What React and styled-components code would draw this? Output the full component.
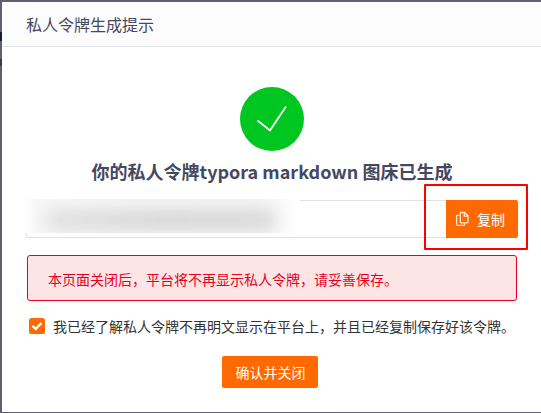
import React from "react";
import styled, { createGlobalStyle } from "styled-components";

const GlobalStyle = createGlobalStyle`
  * { box-sizing: border-box; }
  body { margin: 0; overflow: hidden; }
`;

const Backdrop = styled.div`
  position: relative;
  width: 541px;
  height: 413px;
  padding: 2px 0 1px 2px;
  background: linear-gradient(90deg, #625e6d, #65616f);
  font-family: "Noto Sans CJK SC", "Noto Sans", sans-serif;
  font-size: 14px;
  overflow: hidden;
`;

const PageTrace = styled.span`
  position: absolute;
  left: 0;
  top: ${(p) => p.$top}px;
  width: 2px;
  height: ${(p) => p.$height}px;
  background: ${(p) => p.$color};
`;

const Dialog = styled.section`
  display: flex;
  flex-direction: column;
  height: 410px;
  background: #fff;
`;

const Header = styled.header`
  height: 45px;
  padding-left: 24px;
  border-bottom: 1px solid #e3e9ed;
  background: #fcfcfc;
  color: #45485f;
  font-size: 16px;
  line-height: 44px;
`;

const Body = styled.main`
  display: flex;
  flex-direction: column;
  align-items: center;
  padding: 40px 25px 0 24px;
`;

const SuccessMark = styled.svg`
  display: block;
  width: 64px;
  height: 64px;
  margin-left: 1px;
`;

const Title = styled.h1`
  margin: 8px 0 1px 2px;
  height: 24px;
  line-height: 24px;
  color: #45485f;
  font-size: 18px;
  font-weight: 700;
  white-space: nowrap;
`;

const TokenRow = styled.div`
  position: relative;
  display: flex;
  align-self: stretch;
  width: 492px;
  height: 38px;
  margin-top: 16px;
`;

const TokenField = styled.div`
  flex: 1;
  border: 1px solid #dfdfe8;
  border-right: 0;
  border-radius: 3px 0 0 3px;
  background: #fff;
`;

const TokenMask = styled.div`
  position: absolute;
  left: -3px;
  top: -1px;
  width: 277px;
  height: 34px;
  overflow: hidden;
  background: linear-gradient(90deg, #fff, #f7f7f7 5%, #f4f4f4 60%, #f6f6f6 88%, #fff);

  &::after {
    content: "";
    position: absolute;
    left: 22px;
    top: 11px;
    width: 231px;
    height: 20px;
    border-radius: 9px;
    background: linear-gradient(90deg, #e0e0e0, #d6d6d6 50%, #d8d8d8);
    filter: blur(8px);
  }
`;

const Button = styled.button`
  display: flex;
  align-items: center;
  justify-content: center;
  gap: 7px;
  width: ${(p) => p.$width}px;
  height: ${(p) => p.$height}px;
  padding: ${(p) => p.$padding || "0"};
  border: 0;
  border-radius: ${(p) => p.$radius};
  background: #ff6a00;
  color: #fff;
  font: inherit;
  line-height: 20px;
`;

const CopyIcon = styled.svg`
  flex: none;
  width: 14px;
  height: 16px;
  margin: -1px 1px 0 0;
`;

const Highlight = styled.div`
  position: absolute;
  right: -10px;
  top: -16px;
  width: 104px;
  height: 66px;
  border: 2px solid #fc0000;
  border-radius: 1px;
`;

const Alert = styled.div`
  align-self: stretch;
  width: 490px;
  height: 46px;
  margin: 17px 0 0 1px;
  padding-left: 20px;
  border: 1px solid #e60022;
  border-radius: 3px;
  background: #fde5e5;
  color: #e60022;
  line-height: 47px;
`;

const Agreement = styled.label`
  display: flex;
  align-self: stretch;
  align-items: center;
  gap: 8px;
  height: 20px;
  margin: 15px 0 0 3px;
  color: #333;
  line-height: 20px;
  white-space: nowrap;
`;

const Checkbox = styled.svg`
  flex: none;
  width: 16px;
  height: 16px;
`;

const Footer = styled.footer`
  margin: 20px 3px 0 0;
`;

export default function App() {
  return (
    <>
      <GlobalStyle />
      <Backdrop>
        <PageTrace $top={32} $height={9} $color="#171b38" />
        <PageTrace $top={59} $height={7} $color="#3c3940" />
        <Dialog>
          <Header>私人令牌生成提示</Header>
          <Body>
            <SuccessMark viewBox="0 0 64 64">
              <circle cx="32" cy="32" r="32" fill="#00c621" />
              <path d="M17.5 33.5 30 43.5 46 19.5" fill="none" stroke="#fff" strokeWidth="1.8" />
            </SuccessMark>
            <Title>你的私人令牌typora markdown 图床已生成</Title>
            <TokenRow>
              <TokenField />
              <TokenMask />
              <Button $width={72} $height={38} $radius="0 2px 2px 0" $padding="0 4px 0 0">
                <CopyIcon viewBox="0 0 14 16" fill="none" stroke="#ffe6d3" strokeWidth="1.3">
                  <path d="M5.3 1.5h4.4l3.3 3.2v6.4q0 .8-.8.8H6.1q-.8 0-.8-.8z M9.3 1.5v3.7H13 M5.3 4.3H2.4q-.8 0-.8.8v8.4q0 .8.8.8h6.4q.8 0 .8-.8V12" />
                </CopyIcon>
                复制
              </Button>
              <Highlight />
            </TokenRow>
            <Alert>本页面关闭后，平台将不再显示私人令牌，请妥善保存。</Alert>
            <Agreement>
              <Checkbox viewBox="0 0 16 16">
                <rect width="16" height="16" rx="2.5" fill="#ff6a00" />
                <path d="M3.4 7.8 6.8 10.8 12.4 5" fill="none" stroke="#fff" strokeWidth="2.4" />
              </Checkbox>
              我已经了解私人令牌不再明文显示在平台上，并且已经复制保存好该令牌。
            </Agreement>
            <Footer>
              <Button $width={96} $height={32} $radius="2px" $padding="0 0 0 2px">确认并关闭</Button>
            </Footer>
          </Body>
        </Dialog>
      </Backdrop>
    </>
  );
}
